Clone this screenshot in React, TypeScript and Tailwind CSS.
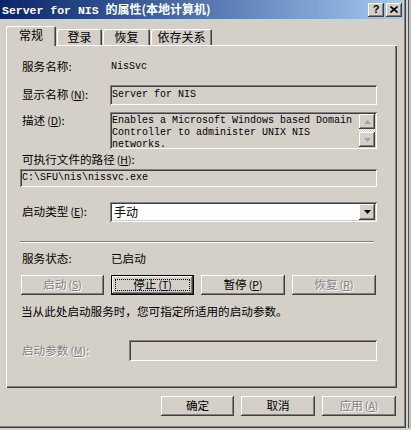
import React from "react";

const raised =
  "shadow-[inset_-1px_-1px_0_#404040,inset_1px_1px_0_#ffffff,inset_-2px_-2px_0_#808080,inset_2px_2px_0_#d4d0c8]";
const sunken =
  "shadow-[inset_1px_1px_0_#808080,inset_-1px_-1px_0_#ffffff,inset_2px_2px_0_#404040,inset_-2px_-2px_0_#d4d0c8]";
const dis = "text-[#808080] [text-shadow:1px_1px_0_#ffffff]";
const cjk = "font-['Noto_Sans_CJK_SC','Noto_Sans',sans-serif]";
const mono = "font-['Liberation_Mono',monospace]";

function Btn({
  children,
  w,
  disabled,
  focused,
}: {
  children: React.ReactNode;
  w: string;
  disabled?: boolean;
  focused?: boolean;
}) {
  if (focused) {
    return (
      <div className={`${w} h-[20px] border border-black bg-[#d4d0c8] flex`}>
        <div className={`flex-1 ${raised} flex items-center justify-center p-[3px]`}>
          <div className="w-full h-full border border-dotted border-black flex items-center justify-center text-[11.6px] leading-none text-black">
            {children}
          </div>
        </div>
      </div>
    );
  }
  return (
    <div
      className={`${w} h-[20px] bg-[#d4d0c8] ${raised} flex items-center justify-center text-[11.6px] leading-none ${
        disabled ? dis : "text-black"
      }`}
    >
      {children}
    </div>
  );
}

function Tab({ children, w, sel }: { children: React.ReactNode; w: string; sel?: boolean }) {
  return (
    <div
      className={`${w} ${
        sel ? "h-[20px] relative z-10 -mb-px" : "h-[16px]"
      } bg-[#d4d0c8] rounded-t-[2px] shadow-[inset_1px_1px_0_#ffffff,inset_-1px_0_0_#404040,inset_-2px_0_0_#808080] flex items-center justify-center text-[12px] leading-none text-black ${
        sel ? "pb-[2px]" : ""
      }`}
    >
      {children}
    </div>
  );
}

function Mn({ c }: { c: string }) {
  return (
    <span className="text-[10.5px] ml-[2px]">
      (<span className="underline underline-offset-1">{c}</span>)
    </span>
  );
}

function Tri({ up, color }: { up?: boolean; color: string }) {
  return (
    <svg width="7" height="4" viewBox="0 0 7 4">
      {up ? (
        <polygon points="3.5,0 7,4 0,4" fill={color} />
      ) : (
        <polygon points="0,0 7,0 3.5,4" fill={color} />
      )}
    </svg>
  );
}

export default function App() {
  return (
    <div className={`w-[411px] h-[430px] bg-[#d4d0c8] flex overflow-hidden ${cjk}`}>
      <div className="w-[406px] h-[428px] bg-[#d4d0c8] flex flex-col shadow-[inset_-1px_-1px_0_#404040,inset_-2px_-2px_0_#808080] shrink-0">
        {/* title bar */}
        <div className="w-[403px] h-[19px] flex items-center bg-linear-to-r from-[#0a246a] to-[#a6caf0] pl-[2px] pr-[1px]">
          <div className="flex items-baseline text-white font-bold whitespace-nowrap">
            <span className={`${mono} text-[11.5px]`}>Server for NIS&nbsp;</span>
            <span className="text-[12px]">的属性(本地计算机)</span>
          </div>
          <div className="ml-auto flex gap-[2px]">
            <div className={`w-[16px] h-[14px] bg-[#d4d0c8] ${raised} flex items-center justify-center text-[11px] font-bold leading-none text-black font-['Liberation_Sans',sans-serif]`}>
              ?
            </div>
            <div className={`w-[16px] h-[14px] bg-[#d4d0c8] ${raised} flex items-center justify-center`}>
              <svg width="8" height="7" viewBox="0 0 8 7">
                <path d="M0.5 0.5 L7.5 6.5 M7.5 0.5 L0.5 6.5" stroke="#000" strokeWidth="1.6" />
              </svg>
            </div>
          </div>
        </div>

        {/* tabs */}
        <div className="mt-[7px] pl-[6px] flex items-end gap-[1px]">
          <Tab w="w-[50px]" sel>
            常规
          </Tab>
          <Tab w="w-[45px]">登录</Tab>
          <Tab w="w-[47px]">恢复</Tab>
          <Tab w="w-[61px]">依存关系</Tab>
        </div>

        {/* panel */}
        <div className="ml-[6px] w-[391px] h-[343px] shadow-[inset_1px_1px_0_#ffffff,inset_-1px_-1px_0_#404040,inset_-2px_-2px_0_#808080] flex flex-col pl-[16px] text-[11.6px] leading-none text-black">
          <div className="mt-[15px] h-[14px] flex items-center">
            <div className="w-[88px]">服务名称:</div>
            <div className={`${mono} text-[10px] ml-[1px]`}>NisSvc</div>
          </div>

          <div className="mt-[11px] h-[20px] flex items-center">
            <div className="w-[88px]">
              显示名称<Mn c="N" />:
            </div>
            <div className={`w-[267px] h-[20px] ${sunken} flex items-center pl-[2px] ${mono} text-[10px]`}>
              Server for NIS
            </div>
          </div>

          <div className="mt-[7px] flex items-start">
            <div className="w-[88px] pt-[3px]">
              描述<Mn c="D" />:
            </div>
            <div className={`w-[267px] h-[37px] ${sunken} p-[2px] flex`}>
              <div className={`flex-1 pl-[0px] pt-[1px] ${mono} text-[10px] leading-[12px] whitespace-pre`}>
                {"Enables a Microsoft Windows based Domain\nController to administer UNIX NIS\nnetworks."}
              </div>
              <div className="w-[16px] flex flex-col">
                <div className={`h-[15px] bg-[#d4d0c8] ${raised} flex items-center justify-center`}>
                  <Tri up color="#a0a0a0" />
                </div>
                <div className="flex-1 bg-[repeating-conic-gradient(#ffffff_0_25%,#d4d0c8_0_50%)] bg-[length:2px_2px]" />
                <div className={`h-[15px] bg-[#d4d0c8] ${raised} flex items-center justify-center`}>
                  <Tri color="#a0a0a0" />
                </div>
              </div>
            </div>
          </div>

          <div className="mt-[4px] h-[14px] flex items-center">
            可执行文件的路径<Mn c="H" />:
          </div>

          <div className={`mt-[2px] -ml-[2px] w-[357px] h-[18px] ${sunken} flex items-center pl-[2px] ${mono} text-[10px]`}>
            C:\SFU\nis\nissvc.exe
          </div>

          <div className="mt-[15px] h-[20px] flex items-center">
            <div className="w-[88px]">
              启动类型<Mn c="E" />:
            </div>
            <div className={`w-[267px] h-[20px] bg-white ${sunken} flex items-center p-[2px]`}>
              <div className="flex-1 pl-[2px] text-[12px]">手动</div>
              <div className={`w-[16px] h-[16px] bg-[#d4d0c8] ${raised} flex items-center justify-center`}>
                <Tri color="#000000" />
              </div>
            </div>
          </div>

          <div className="mt-[19px] -ml-[2px] w-[354px] h-[2px] border-t border-[#808080] border-b border-b-white" />

          <div className="mt-[9px] h-[14px] flex items-center">
            <div className="w-[88px]">服务状态:</div>
            <div className="ml-[1px]">已启动</div>
          </div>

          <div className="mt-[9px] -ml-[1px] flex gap-[7px]">
            <Btn w="w-[83px]" disabled>
              启动<Mn c="S" />
            </Btn>
            <Btn w="w-[83px]" focused>
              停止<Mn c="T" />
            </Btn>
            <Btn w="w-[84px]">
              暂停<Mn c="P" />
            </Btn>
            <Btn w="w-[84px]" disabled>
              恢复<Mn c="R" />
            </Btn>
          </div>

          <div className="mt-[10px] h-[14px] flex items-center -ml-[1px]">
            当从此处启动服务时，您可指定所适用的启动参数。
          </div>

          <div className="mt-[21px] flex items-center">
            <div className={`w-[107px] ${dis}`}>
              启动参数<Mn c="M" />:
            </div>
            <div className={`w-[248px] h-[21px] ${sunken}`} />
          </div>
        </div>

        {/* bottom buttons */}
        <div className="mt-[8px] pr-[10px] flex justify-end gap-[7px]">
          <Btn w="w-[73px]">确定</Btn>
          <Btn w="w-[74px]">取消</Btn>
          <Btn w="w-[74px]" disabled>
            应用<Mn c="A" />
          </Btn>
        </div>
      </div>
      <div className="w-[2px] h-[428px] bg-[#d4d0c8]" />
      <div className="w-[1px] h-[428px] bg-[#505050]" />
      <div className="flex-1 h-[428px] bg-[#c0c0c0]" />
    </div>
  );
}
